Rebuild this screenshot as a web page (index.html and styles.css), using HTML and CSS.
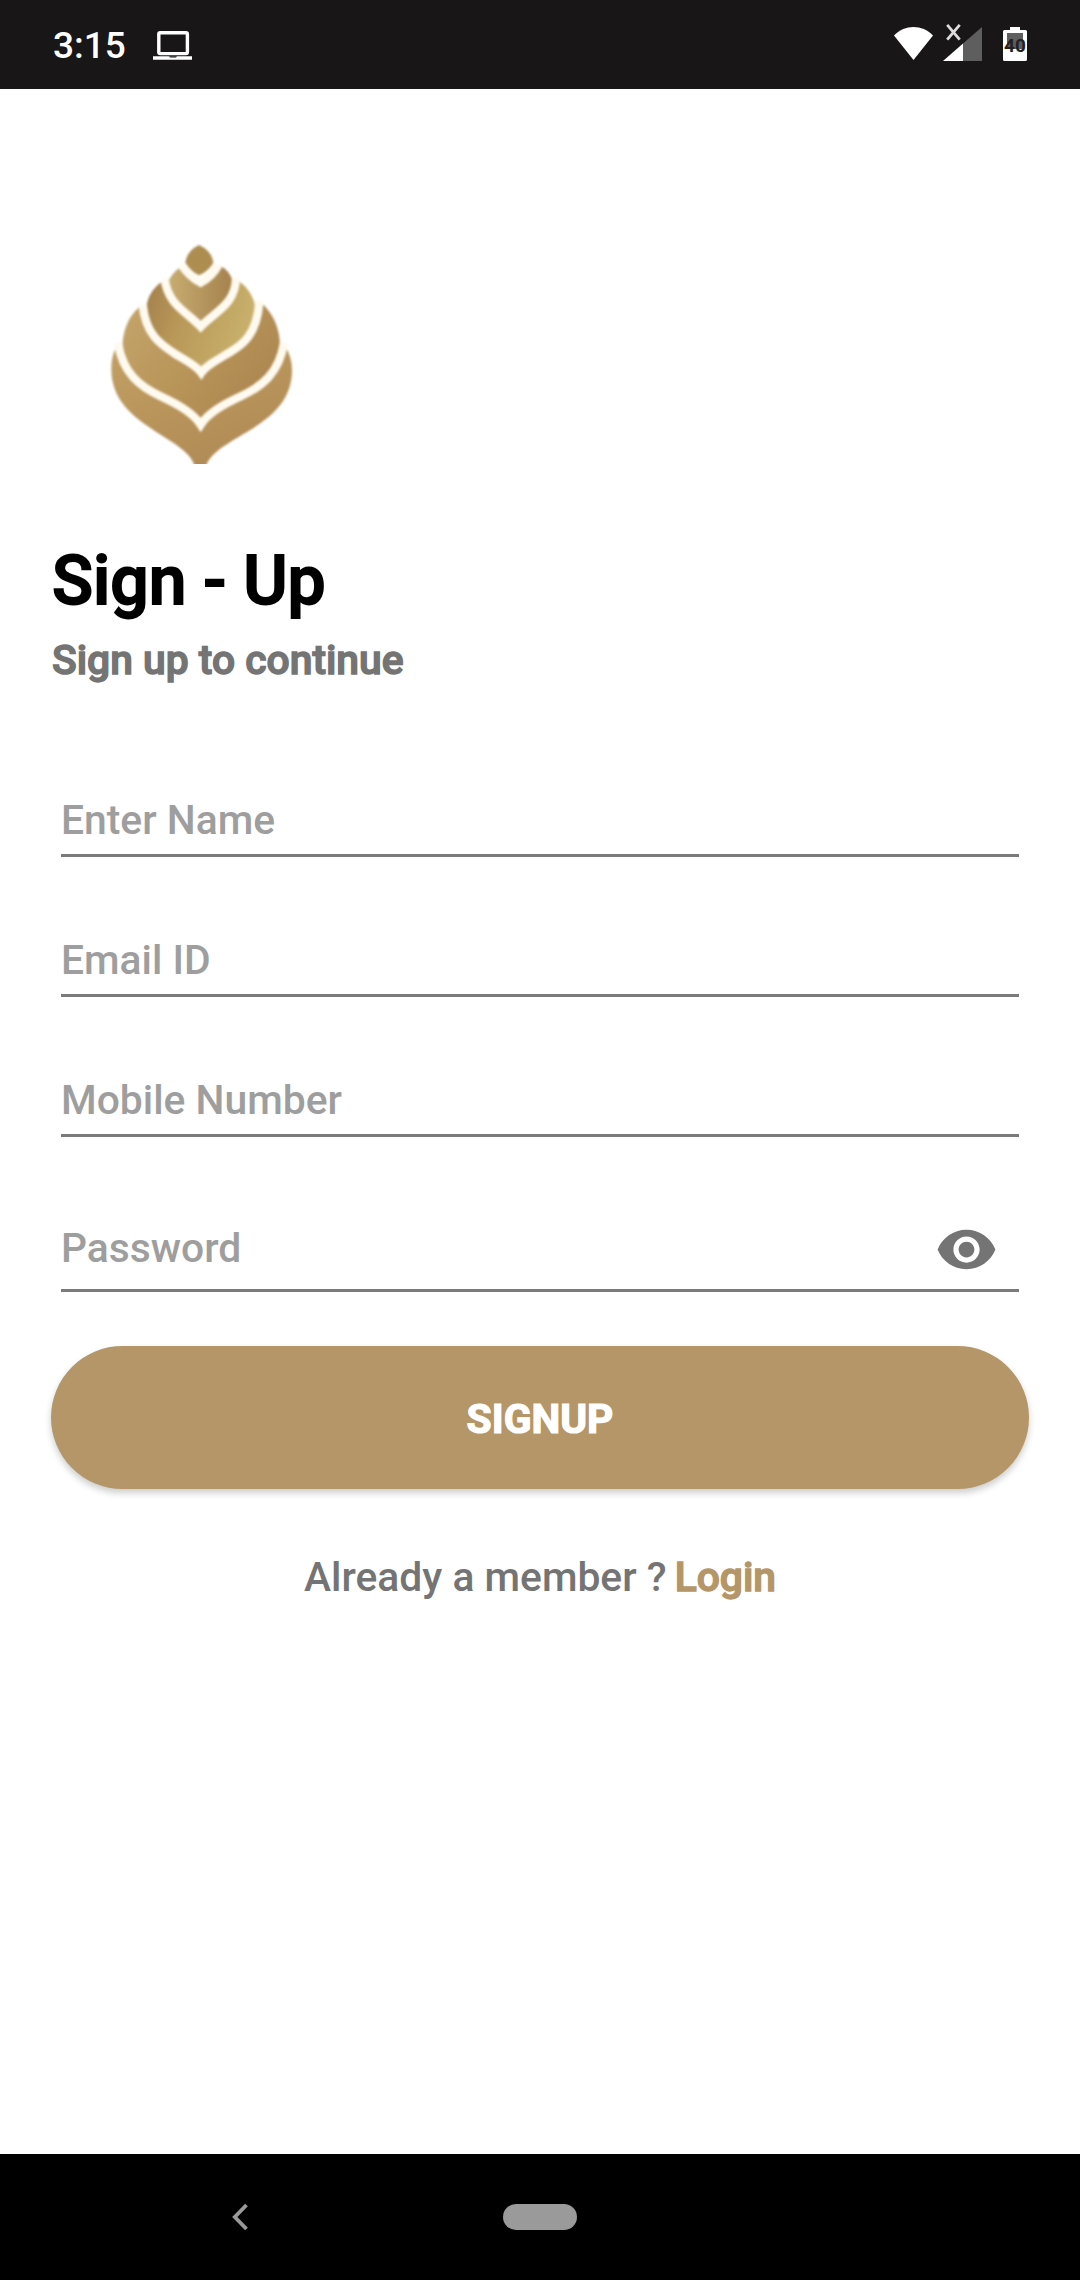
FILE: index.html
```
<!DOCTYPE html>
<html lang="en">
<head>
    <meta charset="UTF-8">
    <meta name="viewport" content="width=device-width, initial-scale=1.0">
    <title>Sign - Up</title>
    <link rel="stylesheet" href="styles.css">
</head>
<body>

    <header class="status-bar">
        <span class="clock">3:15</span>
        <svg class="icon-laptop" width="40" height="34" viewBox="0 0 40 34">
            <rect x="5.8" y="4.8" width="28.6" height="20.8" rx="1.5" fill="none" stroke="#fff" stroke-width="3.4"/>
            <path d="M0 28.2h39v3.600H0z" fill="#fff"/>
            <path d="M16 28.2h8l-1 1.200h-6z" fill="#181617"/>
        </svg>
        <div class="status-icons">
            <svg width="39" height="34" viewBox="0 0 39 34">
                <path d="M0 8.500C11-2.700 28-2.700 39 8.500L19.500 33z" fill="#fff"/>
            </svg>
            <svg class="icon-signal" width="40" height="38" viewBox="0 0 40 38">
                <path d="M39 4v34H20V20.500z" fill="#5e5e5e"/>
                <path d="M20 20.500V38H0z" fill="#fff"/>
                <path d="M4.200 1.800l12.500 14.800M16.700 1.800L4.200 16.600" fill="none" stroke="#ddd" stroke-width="2.800"/>
            </svg>
            <svg class="icon-battery" width="24" height="34" viewBox="0 0 24 34">
                <path d="M7 0h10v3h5.500Q24 3 24 4.500v28Q24 34 22.500 34h-21Q0 34 0 32.500v-28Q0 3 1.500 3H7z" fill="#fff"/>
                <path d="M4 6h16v16H4z" fill="#5e5e5e"/>
                <text class="battery-level" x="12" y="25" text-anchor="middle">40</text>
            </svg>
        </div>
    </header>

    <main class="signup">
        <svg class="logo" width="220" height="234" viewBox="0 0 660 702">
            <defs>
                <linearGradient id="gold" x1="0" y1="0" x2="1" y2="0.6">
                    <stop offset="0" stop-color="#c5a56c"/>
                    <stop offset="0.5" stop-color="#b9965a"/>
                    <stop offset="1" stop-color="#ac8650"/>
                </linearGradient>
                <linearGradient id="gold-base" x1="0" y1="0" x2="0.6" y2="1">
                    <stop offset="0" stop-color="#c2a063"/>
                    <stop offset="1" stop-color="#b08a55"/>
                </linearGradient>
                <linearGradient id="gold-dark" x1="0" y1="0" x2="1" y2="0.3">
                    <stop offset="0" stop-color="#a37f4c"/>
                    <stop offset="0.4" stop-color="#b99858"/>
                    <stop offset="1" stop-color="#c8b06c"/>
                </linearGradient>
                <linearGradient id="gold-tip" x1="0" y1="0" x2="1" y2="0">
                    <stop offset="0" stop-color="#c8ae72"/>
                    <stop offset="1" stop-color="#a5814d"/>
                </linearGradient>
            </defs>
            <!-- leaves, from the lowest one up -->
            <g class="leaves">
                <path d="M80 350C100 430 150 470 210 498S310 550 332 582C354 550 394 526 454 498S566 430 586 350Q607 383 606 425C602 590 390 615 350 702V720H312V702C280 617 62 585 64 415Q64 375 80 350z" fill="url(#gold-base)"/>
                <path d="M156 226C170 315 215 345 250 368S318 405 334 428C350 405 380 391 418 368S500 315 514 218Q568 268 570 345C560 430 514 470 454 498S354 550 332 582C310 550 270 526 210 498S104 430 97 345Q103 263 156 226z" fill="url(#gold)"/>
                <path d="M218 154C238 225 290 245 332 290C374 245 430 225 446 152Q490 185 497 235C494 315 453 345 418 368S350 405 334 428C318 405 285 391 250 368S174 315 169 232Q175 182 218 154z" fill="url(#gold-dark)"/>
                <path d="M274 110Q298 140 332 158Q366 140 388 106Q426 125 430 165C424 225 374 245 332 290C290 245 238 225 230 165Q245 126 274 110z" fill="url(#gold-tip)"/>
                <path d="M327 45Q365 62 370 98Q355 124 327 136Q302 124 286 98Q291 62 327 45z" fill="#ae8d50"/>
                <g class="veins">
                    <path d="M84 338C98 430 150 470 210 498S310 550 332 584C354 550 394 526 454 498S568 430 582 338"/>
                    <path d="M158 222C166 315 215 345 250 368S318 405 334 428C350 405 380 391 418 368S502 315 508 214"/>
                    <path d="M224 148C234 225 290 245 332 290C374 245 436 225 438 144"/>
                    <path d="M274 104Q298 140 332 158Q366 140 386 104"/>
                </g>
            </g>
        </svg>

        <h1 class="title">Sign - Up</h1>
        <p class="subtitle">Sign up to continue</p>

        <form class="form">
            <input class="field" type="text" placeholder="Enter Name">
            <input class="field" type="email" placeholder="Email ID">
            <input class="field" type="tel" placeholder="Mobile Number">
            <div class="password">
                <input class="password-input" type="password" placeholder="Password">
                <svg class="icon-eye" width="63" height="63" viewBox="0 0 24 24">
                    <path fill="#747474" d="M12 4.500C7 4.500 2.730 7.610 1 12c1.730 4.390 6 7.500 11 7.500s9.270-3.110 11-7.500c-1.730-4.390-6-7.500-11-7.500zM12 17c-2.760 0-5-2.240-5-5s2.240-5 5-5 5 2.240 5 5-2.240 5-5 5zm0-8c-1.660 0-3 1.340-3 3s1.340 3 3 3 3-1.340 3-3-1.340-3-3-3z"/>
                </svg>
            </div>
            <button class="signup-button" type="button">SIGNUP</button>
        </form>

        <div class="member">
            <span>Already a member ?</span>
            <a class="login" href="#">Login</a>
        </div>
    </main>

    <footer class="nav-bar">
        <svg class="nav-back" width="17" height="28" viewBox="0 0 17 28">
            <path d="M14.500 2L2.800 14l11.700 12" fill="none" stroke="#9a9a9a" stroke-width="3.800"/>
        </svg>
        <span class="nav-home"></span>
    </footer>

</body>
</html>
```
FILE: styles.css
```
* {
    box-sizing: border-box;
}

body {
    display: flex;
    flex-direction: column;
    height: 2280px;
    margin: 0;
    background-color: #fff;
    font-family: Roboto, "Liberation Sans", sans-serif;
    font-weight: 500;
    font-size: 40.8px;
    line-height: 49px;
    color: #747474;
}

svg {
    display: block;
}

/* status bar */
.status-bar {
    display: flex;
    align-items: flex-start;
    height: 89px;
    padding: 0 53px 0 53px;
    background-color: #181617;
}

.clock {
    width: 100px;
    padding-top: 24px;
    font-size: 37px;
    line-height: 44px;
    color: #fff;
}

.icon-laptop {
    margin-top: 28px;
}

.status-icons {
    display: flex;
    align-items: flex-start;
    margin-left: auto;
    padding-top: 27px;
}

.icon-signal {
    margin: -4px 20px 0 10px;
}

.battery-level {
    font-size: 19px;
    font-weight: 700;
    fill: #222;
}

/* content */
.signup {
    flex: 1;
    padding: 141px 51px 0;
}

.logo {
    margin-left: 39px;
}

.leaves {
    filter: blur(3px);
}

.veins {
    fill: none;
    stroke: #fffaf0;
    stroke-width: 25px;
}

.title {
    margin: 76px 0 0 1px;
    font-size: 67.8px;
    font-weight: 500;
    line-height: 82px;
    color: #000;
    -webkit-text-stroke: 1.8px #000;
}

.subtitle {
    margin: 14px 0 0 1px;
    -webkit-text-stroke: 1.4px #747474;
}

.form {
    display: flex;
    flex-direction: column;
    margin-top: 110px;
}

.field,
.password {
    height: 62px;
    margin: 0 10px 78px;
    padding: 0 0 10px;
    border: none;
    border-bottom: 3px solid #7b7b7b;
}

.field,
.password-input {
    background: none;
    font: inherit;
    color: #222;
    outline: none;
}

.field::placeholder,
.password-input::placeholder {
    color: #9e9e9e;
    opacity: 1;
}

.password {
    display: flex;
    align-items: flex-start;
    height: 70px;
    margin: 7px 10px 54px;
    padding: 0 21px 0 0;
}

.password-input {
    flex: 1;
    height: 50px;
    padding: 1px 0 0;
    border: none;
}

.icon-eye {
    margin-top: -4px;
}

.signup-button {
    height: 143px;
    padding: 3px 0 0;
    border: none;
    border-radius: 72px;
    background-color: #b49668;
    box-shadow: 0 4px 7px rgba(0, 0, 0, 0.2);
    font: inherit;
    font-weight: 700;
    color: #fff;
    -webkit-text-stroke: 1.2px #fff;
}

.member {
    display: flex;
    justify-content: center;
    gap: 8px;
    margin-top: 64px;
}

.login {
    color: #b49668;
    text-decoration: none;
    -webkit-text-stroke: 1.4px #b49668;
}

/* navigation bar */
.nav-bar {
    display: flex;
    align-items: center;
    height: 126px;
    padding-left: 232px;
    background-color: #000;
}

.nav-home {
    width: 74px;
    height: 26px;
    margin-left: 254px;
    border-radius: 13px;
    background-color: #9a9a9a;
}
```
